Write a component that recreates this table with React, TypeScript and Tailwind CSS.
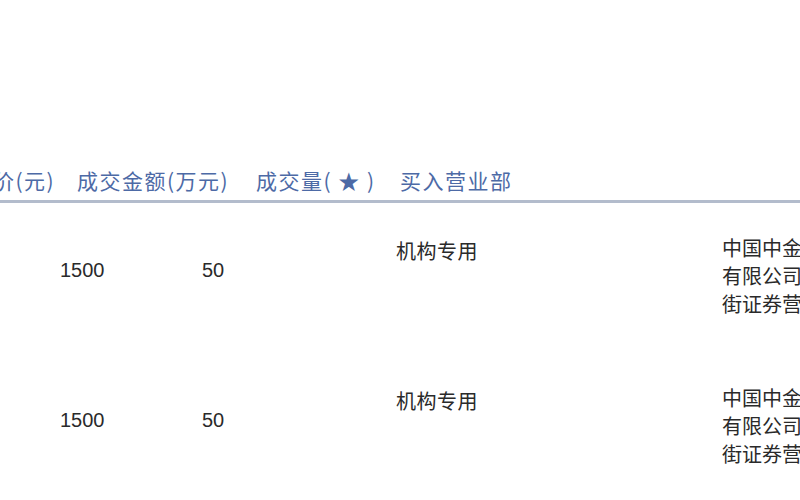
import React from "react";

const rows = [
  { price: "1500", vol: "50", buyer: "机构专用", seller: "中国中金财富证券有限公司北京宋庄街证券营业部" },
  { price: "1500", vol: "50", buyer: "机构专用", seller: "中国中金财富证券有限公司北京宋庄街证券营业部" },
];

export default function App() {
  return (
    <div
      className="w-[800px] h-[500px] overflow-hidden bg-white relative"
      style={{ fontFamily: '"Noto Sans CJK SC", "Noto Sans", sans-serif' }}
    >
      <div className="h-[160px]" />
      <div className="border-b-[3px] border-[#b3bccc] w-[1000px]">
        <div className="flex -ml-[7px] h-[40px] items-center text-[21px] text-[#4d6aa6] tracking-[1.5px] whitespace-nowrap leading-none">
          <div className="w-[84px] shrink-0">价(元)</div>
          <div className="w-[179px] shrink-0">成交金额(万元)</div>
          <div className="w-[144px] shrink-0">成交量( ★ )</div>
          <div className="shrink-0">买入营业部</div>
        </div>
      </div>
      {rows.map((r, i) => (
        <div key={i} className="flex h-[150px] pl-[60px] text-[#2a2a2a] whitespace-nowrap">
          <div className="w-[142px] shrink-0 pt-[53px] text-[20px] leading-[28px]" style={{ fontFamily: '"Liberation Sans", sans-serif' }}>
            {r.price}
          </div>
          <div className="w-[194px] shrink-0 pt-[53px] text-[20px] leading-[28px]" style={{ fontFamily: '"Liberation Sans", sans-serif' }}>
            {r.vol}
          </div>
          <div className="w-[326px] shrink-0 pt-[34px] text-[20px] leading-[28px] tracking-[0.5px]">{r.buyer}</div>
          <div className="w-[168px] shrink-0 pt-[31px] text-[20px] leading-[28px] whitespace-normal break-all">
            {r.seller}
          </div>
        </div>
      ))}
    </div>
  );
}
